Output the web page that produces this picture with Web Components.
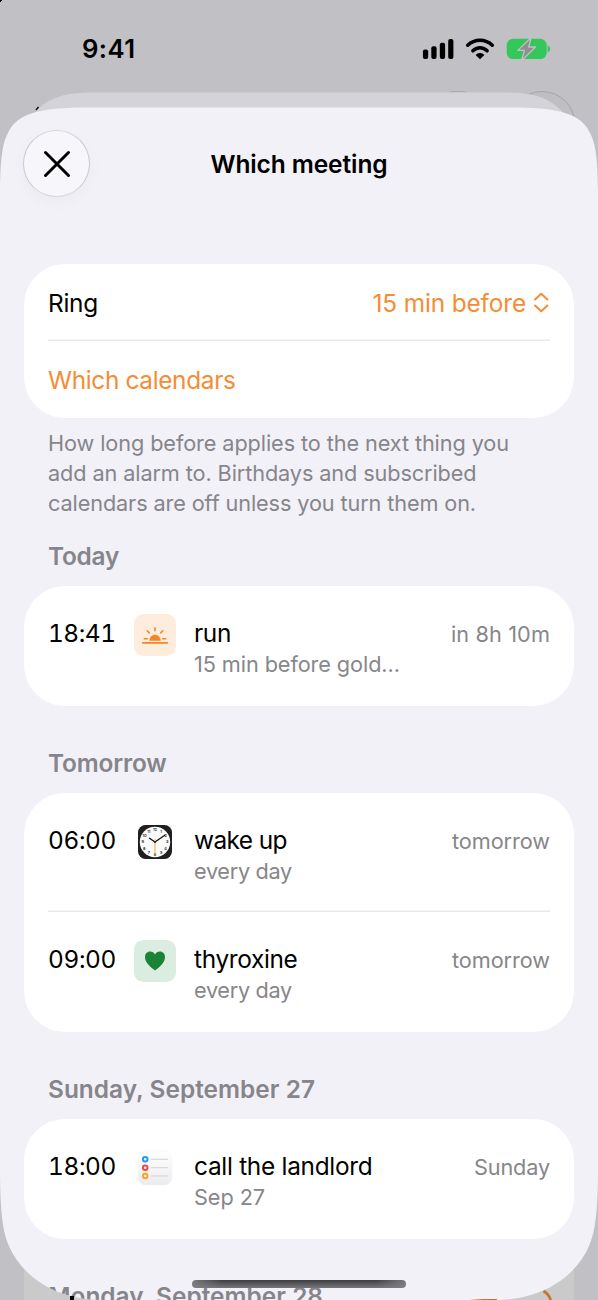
<!DOCTYPE html>
<html lang="en">
<head>
<meta charset="utf-8">
<title>Which meeting</title>
<style>
html,body{margin:0;height:1300px;overflow:hidden;background:#c1c0c5}
body{font-family:Inter,"Liberation Sans",sans-serif;color:#000}
</style>
</head>
<body>
<phone-screen>
  <status-bar slot="status"></status-bar>
  <meeting-sheet>
    <sheet-header><fit-text w="177">Which meeting</fit-text></sheet-header>
    <list-card>
      <setting-row><fit-text w="50">Ring</fit-text><value-picker slot="value"><fit-text w="153.500">15 min before</fit-text></value-picker></setting-row>
      <setting-row link><fit-text w="187.500">Which calendars</fit-text></setting-row>
    </list-card>
    <foot-note>
      <fit-text w="461">How long before applies to the next thing you</fit-text>
      <fit-text w="428.500">add an alarm to. Birthdays and subscribed</fit-text>
      <fit-text w="428">calendars are off unless you turn them on.</fit-text>
    </foot-note>
    <section-title style="--top:22.500px"><fit-text w="71">Today</fit-text></section-title>
    <list-card>
      <event-row icon="sunrise"><fit-text slot="time" w="67.500">18:41</fit-text><fit-text w="37">run</fit-text><fit-text slot="sub" w="206">15 min before gold…</fit-text><fit-text slot="when" w="99">in 8h 10m</fit-text></event-row>
    </list-card>
    <section-title><fit-text w="118.500">Tomorrow</fit-text></section-title>
    <list-card>
      <event-row icon="clock"><fit-text slot="time" w="68">06:00</fit-text><fit-text w="93">wake up</fit-text><fit-text slot="sub" w="98">every day</fit-text><fit-text slot="when" w="98">tomorrow</fit-text></event-row>
      <event-row icon="heart"><fit-text slot="time" w="68">09:00</fit-text><fit-text w="103.500">thyroxine</fit-text><fit-text slot="sub" w="98">every day</fit-text><fit-text slot="when" w="98">tomorrow</fit-text></event-row>
    </list-card>
    <section-title><fit-text w="267">Sunday, September 27</fit-text></section-title>
    <list-card>
      <event-row icon="reminders"><fit-text slot="time" w="68">18:00</fit-text><fit-text w="178.500">call the landlord</fit-text><fit-text slot="sub" w="71">Sep 27</fit-text><fit-text slot="when" w="76">Sunday</fit-text></event-row>
    </list-card>
    <section-title><fit-text w="275">Monday, September 28</fit-text></section-title>
  </meeting-sheet>
  <home-indicator slot="home"></home-indicator>
</phone-screen>
<script>
const hours = [...Array(12)].map((_, i) => {
  const a = (i + 1) * Math.PI / 6;
  return `<text x="${(21 + 12.3 * Math.sin(a)).toFixed(2)}" y="${(22.4 - 12.3 * Math.cos(a)).toFixed(2)}">${i + 1}</text>`;
}).join('');
const icons = {
  sunrise: `<svg width="42" height="42" viewBox="0 0 42 42"><rect width="42" height="42" rx="9.500" fill="#feeddd"/><path d="M15.300 26.800a5.700 6 0 0 1 11.400 0z" fill="#f68526"/><path d="M8.700 28.900H33.300M10.300 24.700h3M28.700 24.700h3M13.200 16.800l2.200 2.200M28.800 16.800l-2.200 2.200M21 13.700v3" stroke="#f68526" stroke-width="1.600" stroke-linecap="round"/></svg>`,
  heart: `<svg width="42" height="42" viewBox="0 0 42 42"><rect width="42" height="42" rx="9.500" fill="#dbece0"/><path d="M21 30.500C17 27.500 11 22.500 11 17.200C11 13.800 13.200 11.600 16 11.600C18.300 11.600 20 12.700 21 14.600C22 12.700 23.700 11.600 26 11.600C28.800 11.600 31 13.800 31 17.200C31 22.500 25 27.500 21 30.500z" fill="#1a8337"/></svg>`,
  clock: `<svg width="42" height="42" viewBox="0 0 42 42"><rect x="4" y="4" width="34" height="34" rx="7.500" fill="#1f1f21"/><circle cx="21" cy="21" r="15.200" fill="#fafafa"/><g font-family="Inter,sans-serif" font-weight="600" font-size="3.900" text-anchor="middle" fill="#222">${hours}</g><path d="M21 21L15.500 17.200M21 21L30.800 14.300" stroke="#111" stroke-width="1.300" stroke-linecap="round"/><path d="M21 18V34" stroke="#e7a53a" stroke-width=".9"/><circle cx="21" cy="21" r="1.100" fill="#222"/></svg>`,
  reminders: `<svg width="42" height="42" viewBox="0 0 42 42"><defs><linearGradient id="g" x2="0" y2="1"><stop stop-color="#fff"/><stop offset="1" stop-color="#ececee"/></linearGradient></defs><rect x="4" y="4" width="34" height="34" rx="7.500" fill="url(#g)" stroke="#f3f3f4" stroke-width=".5"/><path d="M17 12.300H34M17 20.700H34M17 29H34" stroke="#d3d3d5" stroke-width="1"/><g fill="none" stroke-width="2"><circle cx="11.200" cy="12.300" r="2.300" stroke="#1e9bf7"/><circle cx="11.200" cy="20.700" r="2.300" stroke="#f0484b"/><circle cx="11.200" cy="29" r="2.300" stroke="#f8a526"/></g></svg>`
};

const define = (name, html, setup) => {
  const t = document.createElement('template');
  t.innerHTML = html;
  customElements.define(name, class extends HTMLElement {
    constructor() {
      super();
      this.attachShadow({mode: 'open'}).append(t.content.cloneNode(true));
    }
    connectedCallback() { if (setup) setup(this, this.shadowRoot); }
  });
};

define('phone-screen', `
<style>
:host{display:block;position:relative;width:598px;height:1300px;overflow:hidden;background:#c1c0c5}
.behind{position:absolute;inset:0}
.page{position:relative;display:flex;flex-direction:column;height:1300px}
</style>
<svg class="behind" width="598" height="1300" viewBox="0 0 598 1300">
  <path d="M0 0h2v1h-1v1H0z" fill="#000"/>
  <path d="M24 1255h550v45H24z" fill="#cacaca"/>
  <path d="M450 92q8-1.500 16 0" fill="none" stroke="#aaa9ae"/>
  <circle cx="542" cy="124.500" r="33" fill="#bfbec3" stroke="#a6a5aa"/>
  <path d="M36 110L38.500 107" stroke="#111" stroke-width="1.500"/>
  <path d="M32 116C43 103 55 92.500 92 92.500H506C543 92.500 555 103 566 116z" fill="#d4d3d8"/>
</svg>
<div class="page"><slot name="status"></slot><slot></slot></div>
<svg class="behind" width="598" height="1300" viewBox="0 0 598 1300" pointer-events="none">
  <path d="M70 1296h4v4h-4z" fill="#000"/>
  <path d="M470 1300L482 1299H497V1300z" fill="#c8752c"/>
  <path d="M543.500 1291Q549 1294 551 1301" fill="none" stroke="#c8752c" stroke-width="2.600"/>
</svg>
<slot name="home"></slot>`);

define('status-bar', `
<style>
:host{display:flex;box-sizing:border-box;flex:none;height:107px;padding:34px 47.500px 0 82px;justify-content:space-between;align-items:flex-start}
.time{font-weight:600;font-size:25.700px;line-height:29px}
.icons{display:flex;gap:11px;height:29px;align-items:center}
svg{display:block}
</style>
<div class="time"><fit-text w="53.500">9:41</fit-text></div>
<div class="icons">
<svg width="31.500" height="22" viewBox="0 0 31.500 22"><rect x=".9" y="11.500" width="5.300" height="9.500" rx="2"/><rect x="9.300" y="8.200" width="5.300" height="12.800" rx="2"/><rect x="17.800" y="4.700" width="5.300" height="16.300" rx="2"/><rect x="26.200" y="1" width="5.200" height="20" rx="2"/></svg>
<svg width="30" height="22" viewBox="0 0 30 22"><g fill="none" stroke="#000" stroke-width="3.500" stroke-linecap="round"><path d="M2.700 7.200C9.600.500 20.400.500 27.300 7.200"/><path d="M7.900 12.800C12 8.800 18 8.800 22.100 12.800"/></g><path d="M15 21.200L11.200 17.600Q10.500 16.800 11.400 16.200Q15 13.900 18.600 16.200Q19.500 16.800 18.800 17.600z"/></svg>
<svg width="45" height="22" viewBox="0 0 45 22"><rect x=".7" y=".8" width="40" height="20.200" rx="6.300" fill="#34c759"/><path d="M41.600 7.600q2.700.8 2.700 3.500t-2.700 3.500z" fill="#34c759"/><path d="M25.200-.500L11.800 12.400h6.600L15.500 22.700 29.500 9h-6.800z" fill="#8f8e94" stroke="#c1c0c5" stroke-width="1.300" stroke-linejoin="round"/></svg>
</div>`);

define('meeting-sheet', `
<style>
:host{display:flex;flex-direction:column;box-sizing:border-box;flex:none;position:relative;height:1193px;padding:1px 24px 0;background:#f2f1f7;
clip-path:path("M0 83C.5 53 2 37 8 26C15 11 30 1.200 80 .6H518C568 1.200 583 11 590 26C596 37 597.500 53 598 83V1068C597.500 1108 595 1125 589 1139C578 1165 548 1192 498 1193H100C50 1192 20 1165 9 1139C3 1125 .5 1108 0 1068z")}
</style><slot></slot>`);

define('sheet-header', `
<style>
:host{display:grid;grid-template-columns:67px 1fr 67px;align-items:center;height:112px;margin-bottom:44px;flex:none}
.title{justify-self:center;font-weight:600;font-size:24.500px;line-height:30px}
button{width:67px;height:67px;margin:0 0 1px -1px;box-sizing:border-box;border:1px solid #c9c8cd;border-top-color:#d8d7dc;border-bottom-color:#d8d7dc;border-radius:50%;background:#f7f7fb;padding:0;display:grid;place-items:center;box-shadow:0 5px 16px rgba(0,0,0,.03)}
</style>
<button aria-label="Close"><svg width="28" height="28" viewBox="0 0 28 28"><path d="M2.500 2.500L25.500 25.500M25.500 2.500L2.500 25.500" stroke="#000" stroke-width="3" stroke-linecap="round"/></svg></button>
<div class="title"><slot></slot></div>`);

define('list-card', `
<style>
:host{display:block;flex:none;background:#fff;border-radius:41px;padding:0 24px}
::slotted(:not(:first-child)){box-shadow:0 -1.500px #e9e9eb}
</style><slot></slot>`);

define('setting-row', `
<style>
:host{display:flex;box-sizing:border-box;height:77px;align-items:center;justify-content:space-between;font-size:24.400px;line-height:30px;padding-top:1px}
:host([link]){color:#f68c34}
</style><slot></slot><slot name="value"></slot>`);

define('value-picker', `
<style>
:host{display:flex;align-items:center;gap:6.500px;color:#f68c34;padding-right:.5px}
svg{display:block}
</style><slot></slot>
<svg width="17" height="22" viewBox="0 0 17 22"><path d="M2 7.500L8.200 1.800 14.400 7.500M2 13.500L8.200 19.200 14.400 13.500" fill="none" stroke="#f68c34" stroke-width="2" stroke-linecap="round" stroke-linejoin="round"/></svg>`);

define('foot-note', `
<style>
:host{display:flex;flex:none;flex-direction:column;padding:11px 24px 0;font-size:21.700px;line-height:29.800px;color:#86858b}
</style><slot></slot>`);

define('section-title', `
<style>
:host{display:block;flex:none;box-sizing:border-box;padding:0 24px 0;margin-top:var(--top,42px);height:45px;font-weight:600;font-size:24.400px;line-height:31px;color:#86858b}
</style><slot></slot>`);

define('event-row', `
<style>
:host{display:grid;box-sizing:border-box;height:119.750px;grid-template-columns:86px 60px 1fr auto;padding-top:28px;font-size:24.400px;align-items:start}
.time,.name{line-height:31px;padding-top:4px}
.time{font-feature-settings:"tnum"}
.sub{font-size:21.700px;line-height:30px;color:#87868a}
.when{font-size:21.700px;line-height:31px;padding-top:5px;color:#87868a}
svg{display:block}
</style>
<div class="time"><slot name="time"></slot></div>
<div class="icon"></div>
<div><div class="name"><slot></slot></div><div class="sub"><slot name="sub"></slot></div></div>
<div class="when"><slot name="when"></slot></div>`, (el, root) => {
  root.querySelector('.icon').innerHTML = icons[el.getAttribute('icon')];
});

define('home-indicator', `
<style>
:host{display:block;position:absolute;left:192px;bottom:12px;width:214px;height:8px;border-radius:4px;background:linear-gradient(90deg,rgba(128,127,131,.9),transparent 14%,transparent 86%,rgba(128,127,131,.9)),linear-gradient(#3e3e41,#77767b)}
</style>`);

/* One line of text tracked to a given advance width. */
define('fit-text', `<style>:host{display:block;width:max-content;white-space:nowrap}span{display:inline-block}</style><span><slot></slot></span>`);

const fitAll = root => {
  root.querySelectorAll('*').forEach(el => {
    if (el.localName === 'fit-text') {
      const span = el.shadowRoot.querySelector('span');
      const gap = (+el.getAttribute('w') - span.getBoundingClientRect().width) / el.textContent.length;
      span.style.letterSpacing = gap.toFixed(3) + 'px';
    }
    if (el.shadowRoot) fitAll(el.shadowRoot);
  });
};
fitAll(document);
</script>
</body>
</html>
